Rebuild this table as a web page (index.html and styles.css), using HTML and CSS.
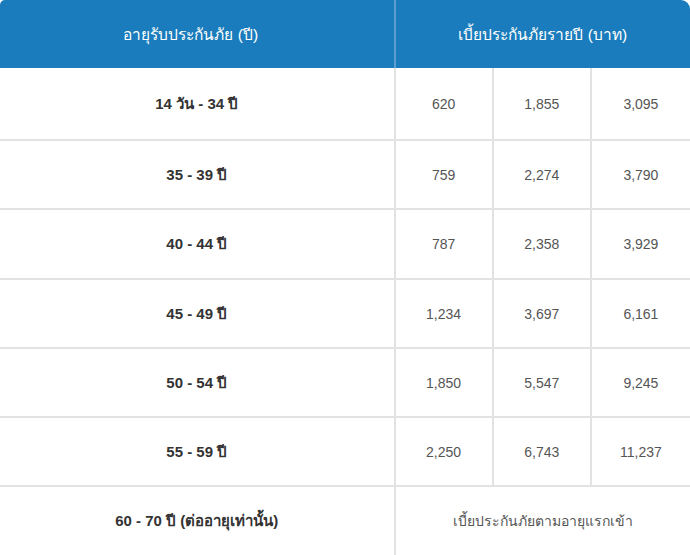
FILE: index.html
```html
<!DOCTYPE html>
<html lang="th">
<head>
<meta charset="utf-8">
<link rel="stylesheet" href="styles.css">
</head>
<body>
<table class="rates">
  <colgroup>
    <col class="c-age">
    <col class="c-num">
    <col class="c-num">
    <col class="c-num">
  </colgroup>
  <thead>
    <tr>
      <th class="h-age">อายุรับประกันภัย (ปี)</th>
      <th class="h-prem" colspan="3">เบี้ยประกันภัยรายปี (บาท)</th>
    </tr>
  </thead>
  <tbody>
    <tr class="first"><td class="age">14 วัน - 34 ปี</td><td>620</td><td>1,855</td><td>3,095</td></tr>
    <tr><td class="age">35 - 39 ปี</td><td>759</td><td>2,274</td><td>3,790</td></tr>
    <tr class="tall"><td class="age">40 - 44 ปี</td><td>787</td><td>2,358</td><td>3,929</td></tr>
    <tr><td class="age">45 - 49 ปี</td><td>1,234</td><td>3,697</td><td>6,161</td></tr>
    <tr><td class="age">50 - 54 ปี</td><td>1,850</td><td>5,547</td><td>9,245</td></tr>
    <tr><td class="age">55 - 59 ปี</td><td>2,250</td><td>6,743</td><td>11,237</td></tr>
    <tr class="last"><td class="age">60 - 70 ปี (ต่ออายุเท่านั้น)</td><td colspan="3">เบี้ยประกันภัยตามอายุแรกเข้า</td></tr>
  </tbody>
</table>
</body>
</html>
```
FILE: styles.css
```css
html, body {
  margin: 0;
  padding: 0;
  background: #ffffff;
}

body {
  font-family: "Liberation Sans", "Noto Sans", "DejaVu Sans", sans-serif;
  overflow: hidden;
}

.rates {
  width: 690px;
  border-collapse: separate;
  border-spacing: 0;
  table-layout: fixed;
}

.c-age { width: 395px; }
.c-num { width: 98px; }

.rates th {
  height: 68px;
  padding: 0;
  background: #1a7cbc;
  color: #ffffff;
  font-size: 15.5px;
  font-weight: normal;
  text-align: center;
  vertical-align: middle;
}

.h-age {
  border-top-left-radius: 5px;
  border-right: 2px solid #5b9fd0;
  padding-right: 12px !important;
}

.h-prem {
  border-top-right-radius: 9px;
}

.rates td {
  height: 67px;
  padding: 0;
  border-bottom: 2px solid #e2e2e2;
  border-right: 2px solid #e2e2e2;
  text-align: center;
  vertical-align: middle;
  font-size: 14px;
  color: #555555;
}

.rates td:last-child {
  border-right: none;
}

.rates tr.first td {
  height: 71px;
}

.rates tr.tall td {
  height: 68px;
}

.rates td.age {
  color: #333333;
  font-weight: bold;
  font-size: 15px;
  border-right: 2px solid #e2e2e2;
}

.rates tr.last td {
  border-bottom: none;
  height: 68px;
}
```
